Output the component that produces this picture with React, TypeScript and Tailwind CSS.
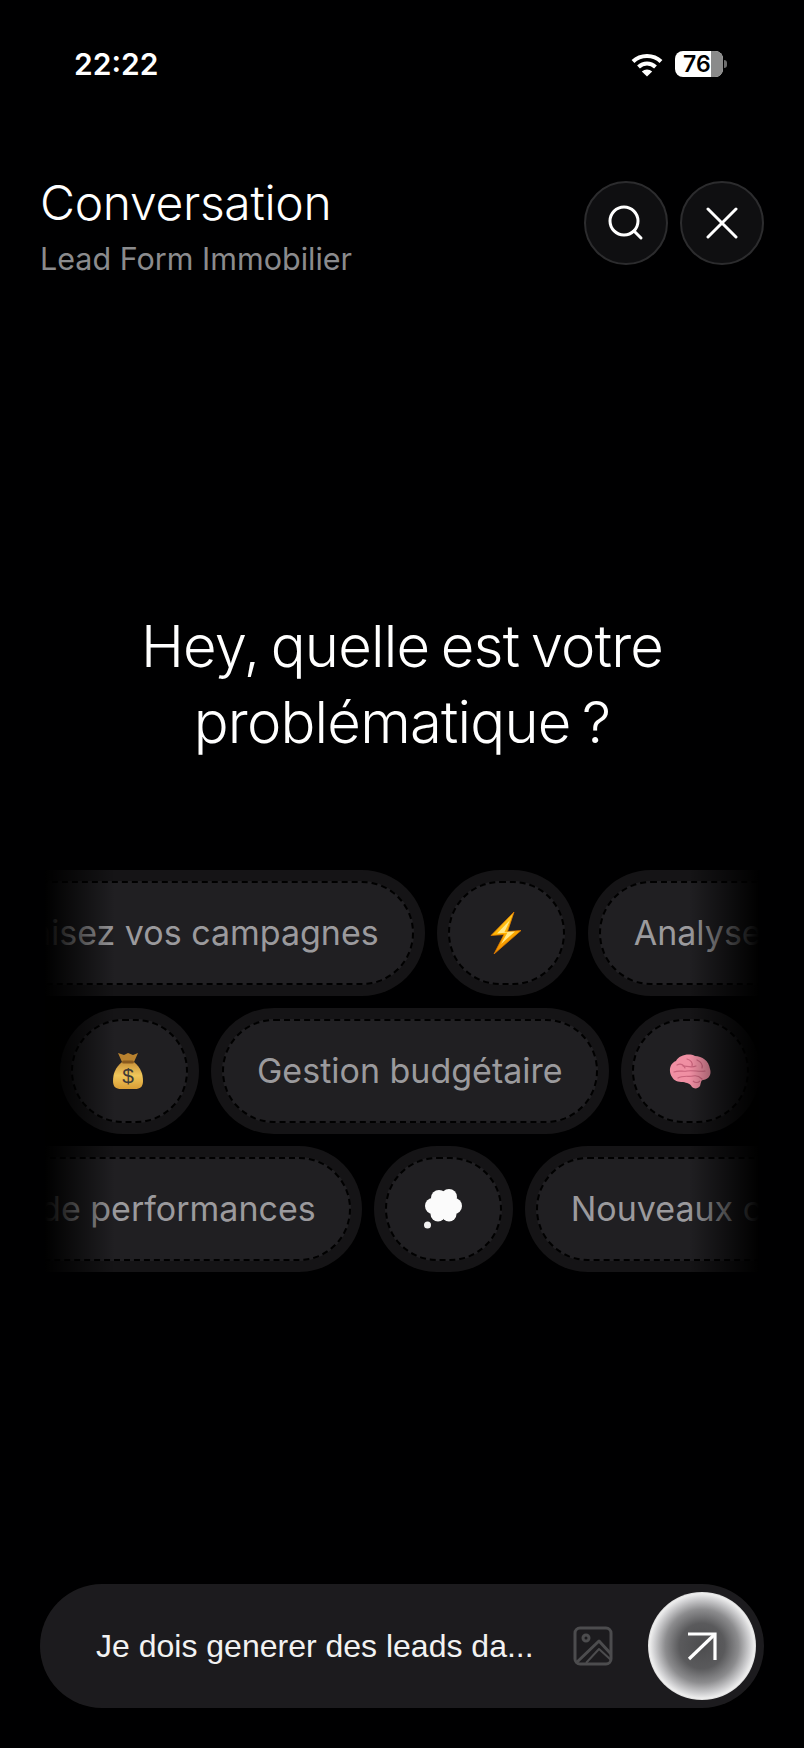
const Wifi = () => (
  <svg width="32" height="25" viewBox="0 0 32 25" fill="none" stroke="#fff" strokeWidth="4">
    <path d="M2 9.5C9.5 2 22.5 2 30 9.5" />
    <path d="M7.5 15C12.5 10.2 19.5 10.2 24.5 15" />
    <path d="M16 24.5 10.8 19.5C13.8 16.8 18.2 16.8 21.2 19.5Z" fill="#fff" stroke="none" />
  </svg>
);

const Battery = () => (
  <div className="flex items-center">
    <div className="relative flex h-[26px] w-[48px] items-center overflow-hidden rounded-[8px] bg-white">
      <div className="absolute inset-y-0 right-0 w-[12px] bg-[#8a8a8a]" />
      <span className="relative ml-[8px] font-['Inter',sans-serif] text-[23px] leading-none font-semibold text-black">
        76
      </span>
    </div>
    <div className="ml-[1px] h-[8px] w-[3px] rounded-r-full bg-[#6d6d6d]" />
  </div>
);

const RoundButton = ({ children }: { children: React.ReactNode }) => (
  <button className="flex h-[84px] w-[84px] items-center justify-center rounded-full border-2 border-[#2c2c2e] bg-[#0f0f11]">
    {children}
  </button>
);

const Bolt = () => (
  <svg width="32" height="42" viewBox="0 0 32 42">
    <defs>
      <linearGradient id="bolt" x1="0" y1="0" x2="0.3" y2="1">
        <stop offset="0" stopColor="#ffd23a" />
        <stop offset="0.55" stopColor="#ffb400" />
        <stop offset="1" stopColor="#f08a00" />
      </linearGradient>
    </defs>
    <path
      d="M24 0 1 23.5 14 22.5 4 42 31 18.5 17.5 19.5Z"
      fill="url(#bolt)"
      stroke="#e07a00"
      strokeWidth="0.8"
    />
    <path d="M20 8 7 21.5 17.5 20.5 11 32 25 19.5 14.5 20Z" fill="#ffe98a" />
  </svg>
);

const MoneyBag = () => (
  <svg className="-ml-[4px]" width="30" height="38" viewBox="0 0 30 38">
    <defs>
      <linearGradient id="bag" x1="0" y1="0" x2="0" y2="1">
        <stop offset="0" stopColor="#c9923a" />
        <stop offset="0.5" stopColor="#f0c65a" />
        <stop offset="1" stopColor="#d99d35" />
      </linearGradient>
    </defs>
    <path d="M5 1 11 3 15 1 20 3 25 1 21 10H9Z" fill="#b9822f" />
    <path d="M9 10C2 16 0 22 0 29 0 35 3 37 8 37H22C27 37 30 35 30 29 30 22 28 16 21 10Z" fill="url(#bag)" />
    <rect x="9" y="8.5" width="12" height="3" rx="1.5" fill="#8a5a1e" />
    <text
      x="15"
      y="31"
      textAnchor="middle"
      fontSize="21"
      fontWeight="500"
      fill="#3e3a36"
      fontFamily="Liberation Sans, sans-serif"
    >
      $
    </text>
  </svg>
);

const Brain = () => (
  <svg width="42" height="35" viewBox="0 0 42 35">
    <path
      d="M3 23C-1 17 1 9 7 7 10 1 20-1 26 2 33 2 40 7 41 15 43 21 39 26 34 26 32 26 32 29 31 32 29 35 25 35 23 33 21 29 18 29 14 28 9 28 5 27 3 23Z"
      fill="#f08fa3"
    />
    <g fill="none" stroke="#c9637c" strokeWidth="1.2" strokeLinecap="round">
      <path d="M8 11C12 9 15 11 16 14" />
      <path d="M18 5C22 6 24 9 23 12" />
      <path d="M28 6C32 8 34 11 33 14" />
      <path d="M5 18C10 16 14 18 18 17 24 16 30 18 36 17" />
      <path d="M9 24C14 21 20 23 24 22 28 21 31 23 33 25" />
      <path d="M14 12C18 12 22 14 27 12" />
    </g>
    <path d="M24 27C26 29 29 29 31 27" stroke="#c9637c" strokeWidth="1.2" fill="none" />
  </svg>
);

const Thought = () => (
  <svg width="38" height="40" viewBox="0 0 38 40">
    <g fill="#fbfbfb">
      <circle cx="9" cy="17" r="8" />
      <circle cx="15" cy="9" r="8" />
      <circle cx="25" cy="8" r="8" />
      <circle cx="30" cy="17" r="8" />
      <circle cx="25" cy="25" r="7.5" />
      <circle cx="14" cy="25" r="7.5" />
      <circle cx="19" cy="16" r="10" />
    </g>
    <circle cx="3.5" cy="36" r="3.5" fill="#f2f2f2" />
  </svg>
);

const TextChip = ({ label }: { label: string }) => (
  <div className="shrink-0 rounded-full bg-[#151416] p-[11px]">
    <div className="flex h-[104px] items-center rounded-full border-2 border-dashed border-[#000000] bg-[#201f22] px-[33px]">
      <span className="font-['Inter',sans-serif] text-[34px] leading-none whitespace-nowrap text-[#9b9a9d]">
        {label}
      </span>
    </div>
  </div>
);

const IconChip = ({ children }: { children: React.ReactNode }) => (
  <div className="shrink-0 rounded-full bg-[#151416] p-[11px]">
    <div className="flex h-[104px] w-[117px] items-center justify-center rounded-full border-2 border-dashed border-[#000000] bg-[#201f22]">
      {children}
    </div>
  </div>
);

export default function App() {
  return (
    <div className="flex h-[1748px] w-[804px] flex-col overflow-hidden bg-[#000001] text-white">
      <div className="mt-[38px] flex h-[52px] items-center justify-between pr-[77px] pl-[74px]">
        <span className="font-['Inter',sans-serif] text-[30px] leading-none font-semibold">22:22</span>
        <div className="flex items-center gap-[12px]">
          <Wifi />
          <Battery />
        </div>
      </div>

      <div className="mt-[84px] flex items-start justify-between px-[40px]">
        <div>
          <h1 className="font-['Inter',sans-serif] text-[48px] leading-[58px] font-light tracking-[-0.3px]">
            Conversation
          </h1>
          <p className="mt-[7px] font-['Inter',sans-serif] text-[30.5px] leading-[40px] text-[#8b8b8d]">
            Lead Form Immobilier
          </p>
        </div>
        <div className="mt-[7px] flex gap-[12px]">
          <RoundButton>
            <svg width="36" height="36" viewBox="0 0 36 36" fill="none" stroke="#fff" strokeWidth="3" strokeLinecap="round">
              <circle cx="16" cy="16" r="14" />
              <path d="M26 26 33 33" />
            </svg>
          </RoundButton>
          <RoundButton>
            <svg width="32" height="32" viewBox="0 0 32 32" fill="none" stroke="#fff" strokeWidth="3" strokeLinecap="round">
              <path d="M2 2 30 30M30 2 2 30" />
            </svg>
          </RoundButton>
        </div>
      </div>

      <h2 className="mt-[329px] text-center font-['Inter',sans-serif] text-[58px] leading-[76px] font-light tracking-[-0.8px] [word-spacing:-4px]">
        Hey, quelle est votre
        <br />
        problématique ?
      </h2>

      <div className="relative mx-[45px] mt-[110px] flex flex-col gap-[12px] overflow-hidden">
        <div className="-ml-[136px] flex gap-[12px]">
          <TextChip label="Optimisez vos campagnes" />
          <IconChip>
            <Bolt />
          </IconChip>
          <TextChip label="Analyse de données" />
        </div>
        <div className="flex gap-[12px] pl-[15px]">
          <IconChip>
            <MoneyBag />
          </IconChip>
          <TextChip label="Gestion budgétaire" />
          <IconChip>
            <Brain />
          </IconChip>
        </div>
        <div className="-ml-[138px] flex gap-[12px]">
          <TextChip label="Suivi de performances" />
          <IconChip>
            <Thought />
          </IconChip>
          <TextChip label="Nouveaux clients" />
        </div>
        <div className="pointer-events-none absolute inset-y-0 left-0 w-[70px] bg-gradient-to-r from-black to-transparent" />
        <div className="pointer-events-none absolute inset-y-0 right-0 w-[70px] bg-gradient-to-l from-black to-transparent" />
      </div>

      <div className="mx-[40px] mt-auto mb-[40px] flex h-[124px] items-center rounded-full bg-[#1c1b1e] pr-[8px] pl-[56px]">
        <span className="font-['Liberation_Sans',sans-serif] text-[32px] leading-none whitespace-nowrap text-[#f2f2f2]">
          Je dois generer des leads da...
        </span>
        <svg className="mr-[35px] ml-auto" width="40" height="40" viewBox="0 0 40 40" fill="none" stroke="#4c4c4e" strokeWidth="3" strokeLinejoin="round">
          <rect x="2" y="2" width="36" height="36" rx="5" />
          <circle cx="13" cy="12" r="3" />
          <path d="M3 37 26 15 38 28" />
          <path d="M13 37 26 23 38 34" strokeWidth="2" />
        </svg>
        <button className="flex h-[108px] w-[108px] items-center justify-center rounded-full bg-[radial-gradient(circle_closest-side,#4c4c4e_0%,#5a5a5c_42%,#8c8c8e_68%,#cfcfd1_88%,#eeeeee_97%,#dcdcdc_100%)]">
          <svg width="32" height="30" viewBox="0 0 32 30" fill="none" stroke="#fff" strokeWidth="3.2">
            <path d="M2 3H29V29" />
            <path d="M28 4 3 28" />
          </svg>
        </button>
      </div>
    </div>
  );
}
